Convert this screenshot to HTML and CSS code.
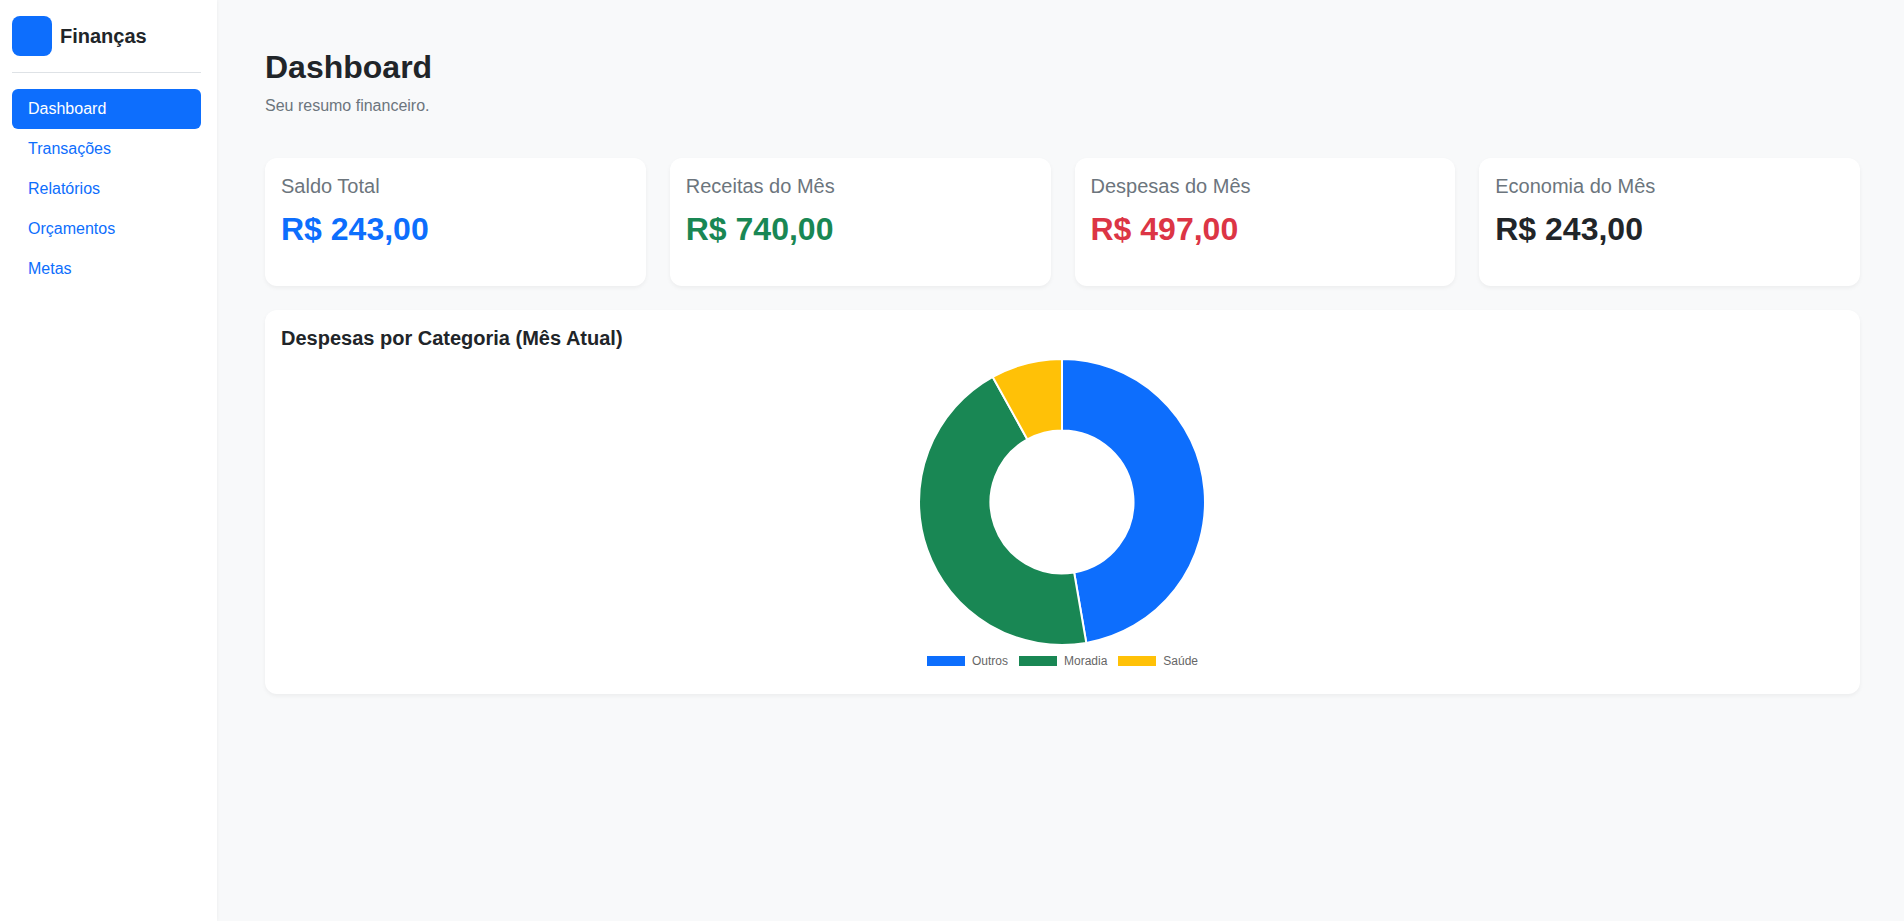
FILE: index.html
```html
<!DOCTYPE html>
<html lang="pt-BR">
<head>
    <meta charset="UTF-8">
    <meta name="viewport" content="width=device-width, initial-scale=1.0">
    <title>Finanças</title>
    <link rel="stylesheet" href="styles.css">
</head>
<body>

    <aside class="sidebar">
        <div class="brand">
            <div class="brand-logo"></div>
            <span class="brand-name">Finanças</span>
        </div>
        <nav class="nav">
            <a class="nav-link active" href="#">Dashboard</a>
            <a class="nav-link" href="#">Transações</a>
            <a class="nav-link" href="#">Relatórios</a>
            <a class="nav-link" href="#">Orçamentos</a>
            <a class="nav-link" href="#">Metas</a>
        </nav>
    </aside>

    <main class="main">
        <header class="page-header">
            <h1>Dashboard</h1>
            <p>Seu resumo financeiro.</p>
        </header>

        <section class="stats">
            <div class="card stat">
                <div class="stat-label">Saldo Total</div>
                <div class="stat-value blue">R$ 243,00</div>
            </div>
            <div class="card stat">
                <div class="stat-label">Receitas do Mês</div>
                <div class="stat-value green">R$ 740,00</div>
            </div>
            <div class="card stat">
                <div class="stat-label">Despesas do Mês</div>
                <div class="stat-value red">R$ 497,00</div>
            </div>
            <div class="card stat">
                <div class="stat-label">Economia do Mês</div>
                <div class="stat-value">R$ 243,00</div>
            </div>
        </section>

        <section class="card chart-card">
            <h2>Despesas por Categoria (Mês Atual)</h2>
            <div class="chart">
                <svg class="donut" viewBox="-144 -144 288 288" width="288" height="288">
                    <path class="slice-blue" d="M0 -143A143 143 0 0 1 24.29 140.92L12.14 70.46A71.5 71.5 0 0 0 0 -71.5Z"/>
                    <path class="slice-green" d="M24.29 140.92A143 143 0 0 1 -69.27 -125.1L-34.63 -62.55A71.5 71.5 0 0 0 12.14 70.46Z"/>
                    <path class="slice-yellow" d="M-69.27 -125.1A143 143 0 0 1 0 -143L0 -71.5A71.5 71.5 0 0 0 -34.63 -62.55Z"/>
                </svg>
                <div class="legend">
                    <div class="legend-item"><span class="swatch swatch-blue"></span>Outros</div>
                    <div class="legend-item"><span class="swatch swatch-green"></span>Moradia</div>
                    <div class="legend-item"><span class="swatch swatch-yellow"></span>Saúde</div>
                </div>
            </div>
        </section>
    </main>

</body>
</html>
```

FILE: styles.css
```css
/* General styling */
html, body {
    margin: 0;
    padding: 0;
    height: 100%;
    overflow: hidden;
}

body {
    display: flex;
    background-color: #f8f9fa;
    color: #212529;
    font-family: "Liberation Sans", Arial, sans-serif;
    font-size: 16px;
}

/* Sidebar */
.sidebar {
    width: 217px;
    flex-shrink: 0;
    box-sizing: border-box;
    padding: 16px 16px 0 12px;
    background-color: #fff;
    box-shadow: 0 0 4px rgba(0, 0, 0, 0.06);
}

.brand {
    display: flex;
    align-items: center;
    gap: 8px;
    padding-bottom: 16px;
    margin-bottom: 16px;
    border-bottom: 1px solid #dee2e6;
}

.brand-logo {
    width: 40px;
    height: 40px;
    border-radius: 8px;
    background-color: #0d6efd;
}

.brand-name {
    font-size: 20px;
    font-weight: bold;
}

.nav {
    display: flex;
    flex-direction: column;
}

.nav-link {
    height: 40px;
    line-height: 40px;
    padding: 0 16px;
    border-radius: 6px;
    color: #0d6efd;
    text-decoration: none;
}

.nav-link.active {
    background-color: #0d6efd;
    color: #fff;
}

/* Main area */
.main {
    flex: 1;
    padding: 48px 44px 0 48px;
}

.page-header {
    margin-bottom: 40px;
}

.page-header h1 {
    margin: 0 0 8px;
    font-size: 32px;
    line-height: 38px;
}

.page-header p {
    margin: 0;
    color: #6c757d;
    line-height: 24px;
}

.card {
    background-color: #fff;
    border-radius: 12px;
    box-shadow: 0 2px 4px rgba(0, 0, 0, 0.05);
}

/* Stat cards */
.stats {
    display: grid;
    grid-template-columns: repeat(4, 1fr);
    gap: 24px;
    margin-bottom: 24px;
}

.stat {
    height: 128px;
    box-sizing: border-box;
    padding: 16px;
}

.stat-label {
    font-size: 20px;
    line-height: 24px;
    margin-bottom: 12px;
    color: #6c757d;
}

.stat-value {
    font-size: 32px;
    font-weight: bold;
    line-height: 38px;
}

.blue { color: #0d6efd; }
.green { color: #198754; }
.red { color: #dc3545; }

/* Chart */
.chart-card {
    height: 384px;
    box-sizing: border-box;
    padding: 16px;
}

.chart-card h2 {
    margin: 0;
    font-size: 20px;
    line-height: 24px;
}

.chart {
    display: flex;
    flex-direction: column;
    align-items: center;
    margin-top: 8px;
}

.donut {
    display: block;
    margin-right: 1px;
}

.donut path {
    stroke: #fff;
    stroke-width: 2;
}

.slice-blue { fill: #0d6efd; }
.slice-green { fill: #198754; }
.slice-yellow { fill: #ffc107; }

.legend {
    display: flex;
    gap: 11px;
    margin-top: 8px;
    font-size: 12px;
    line-height: 14px;
    color: #666;
}

.legend-item {
    display: flex;
    align-items: center;
    gap: 7px;
}

.swatch {
    width: 38px;
    height: 10px;
}

.swatch-blue { background-color: #0d6efd; }
.swatch-green { background-color: #198754; }
.swatch-yellow { background-color: #ffc107; }
```
